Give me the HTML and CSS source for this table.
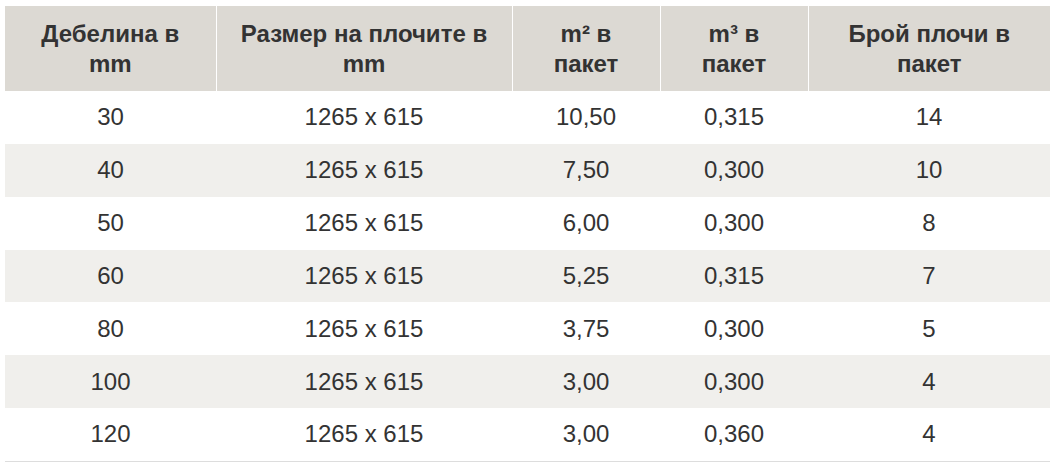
FILE: index.html
```html
<!DOCTYPE html>
<html lang="bg">
<head>
<meta charset="utf-8">
<link rel="stylesheet" href="styles.css">
</head>
<body>
<table class="spec">
  <colgroup>
    <col class="c1"><col class="c2"><col class="c3"><col class="c4"><col class="c5">
  </colgroup>
  <thead>
    <tr>
      <th>Дебелина в mm</th>
      <th>Размер на плочите в mm</th>
      <th>m² в пакет</th>
      <th>m³ в пакет</th>
      <th>Брой плочи в пакет</th>
    </tr>
  </thead>
  <tbody>
    <tr><td>30</td><td>1265 x 615</td><td>10,50</td><td>0,315</td><td>14</td></tr>
    <tr><td>40</td><td>1265 x 615</td><td>7,50</td><td>0,300</td><td>10</td></tr>
    <tr><td>50</td><td>1265 x 615</td><td>6,00</td><td>0,300</td><td>8</td></tr>
    <tr><td>60</td><td>1265 x 615</td><td>5,25</td><td>0,315</td><td>7</td></tr>
    <tr><td>80</td><td>1265 x 615</td><td>3,75</td><td>0,300</td><td>5</td></tr>
    <tr><td>100</td><td>1265 x 615</td><td>3,00</td><td>0,300</td><td>4</td></tr>
    <tr><td>120</td><td>1265 x 615</td><td>3,00</td><td>0,360</td><td>4</td></tr>
  </tbody>
</table>
</body>
</html>
```
FILE: styles.css
```css
html, body {
  margin: 0;
  background: #ffffff;
}
body {
  padding: 6px 4px 0 5px;
  font-family: "Liberation Sans", Arial, sans-serif;
  color: #333333;
}
.spec {
  border-collapse: collapse;
  table-layout: fixed;
  width: 1045px;
  border-bottom: 1px solid #dddddd;
}
.c1 { width: 211px; }
.c2 { width: 296px; }
.c3 { width: 148px; }
.c4 { width: 148px; }
.c5 { width: 242px; }
.spec th {
  background: #dcd9d3;
  font-weight: bold;
  font-size: 24px;
  line-height: 30px;
  padding: 12px 20px;
  height: 85px;
  box-sizing: border-box;
  text-align: center;
  vertical-align: middle;
  border-left: 1px solid #ffffff;
}
.spec th:first-child {
  border-left: 0;
}
.spec td {
  font-size: 24px;
  height: 52.86px;
  padding: 0 8px;
  box-sizing: border-box;
  text-align: center;
  vertical-align: middle;
}
.spec tbody tr:nth-child(even) td {
  background: #f0efec;
}
```
